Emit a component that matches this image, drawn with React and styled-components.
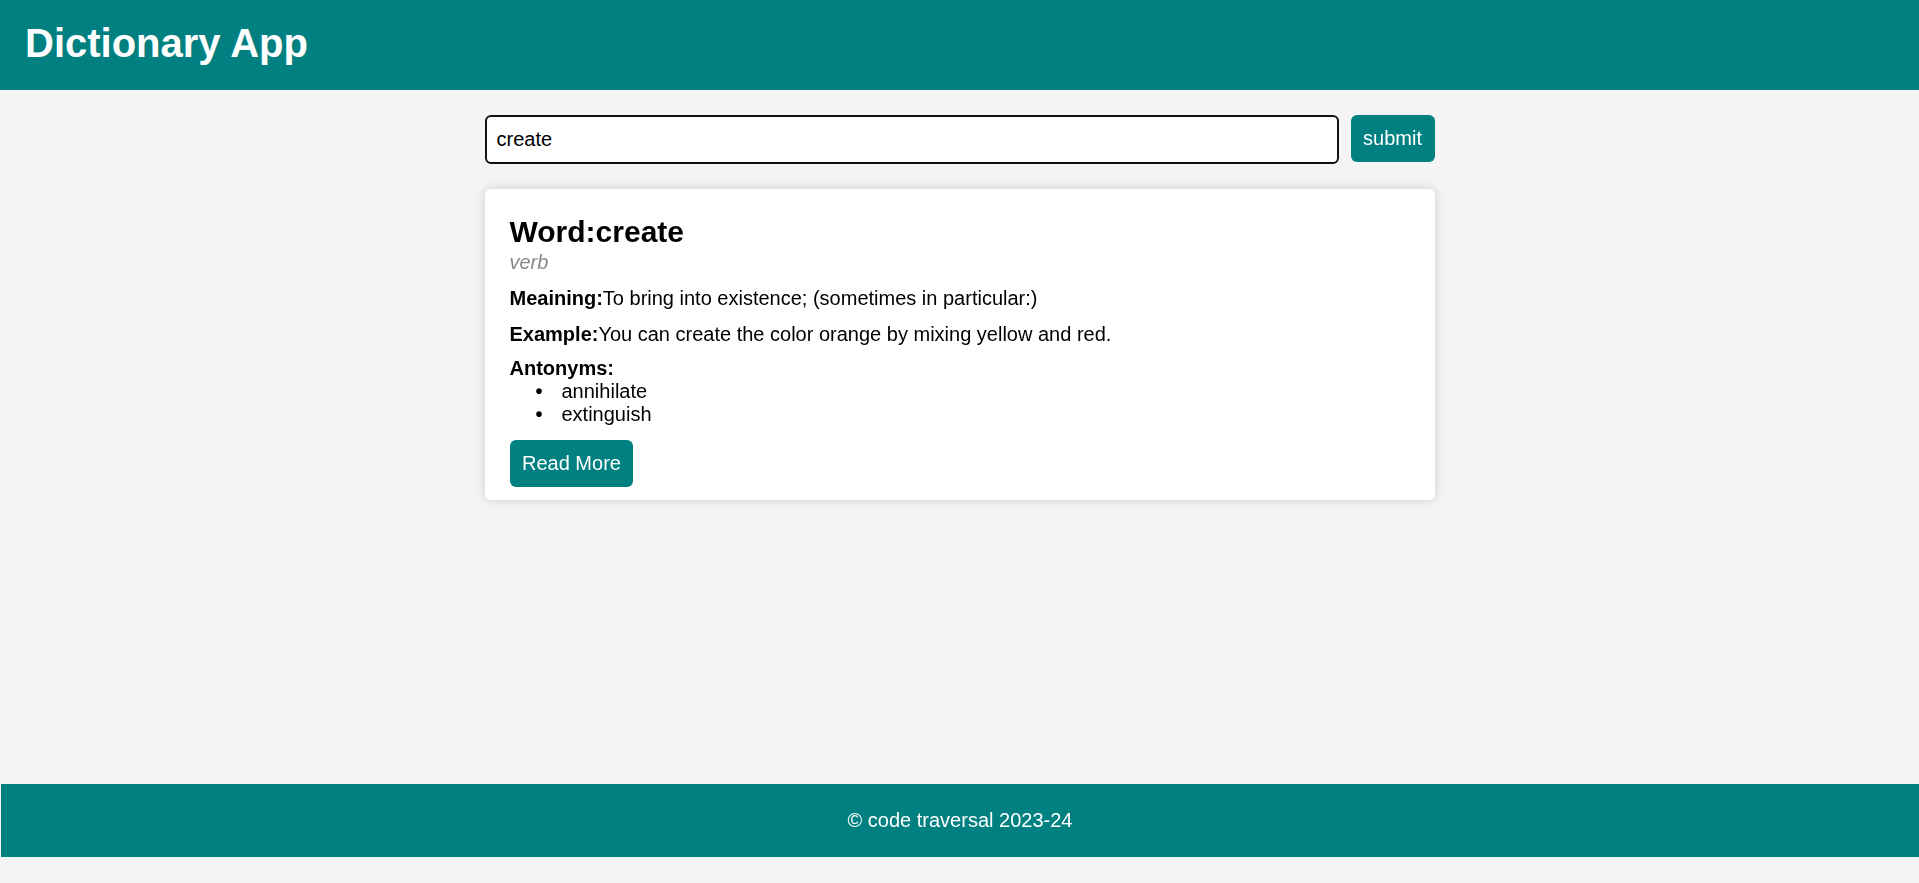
import React, { useState } from "react";
import styled, { createGlobalStyle } from "styled-components";

const GlobalStyle = createGlobalStyle`
  * {
    box-sizing: border-box;
  }

  body {
    margin: 0;
    background-color: #f4f4f4;
    font-family: "Liberation Sans", Arial, sans-serif;
    font-size: 20px;
    line-height: 23px;
    color: #000;
  }
`;

const entry = {
  word: "create",
  partOfSpeech: "verb",
  meaning: "To bring into existence; (sometimes in particular:)",
  example: "You can create the color orange by mixing yellow and red.",
  antonyms: ["annihilate", "extinguish"],
};

const App = () => {
  const [query, setQuery] = useState("create");

  return (
    <>
      <GlobalStyle />
      <Page>
        <Header>
          <Title>Dictionary App</Title>
        </Header>
        <Main>
          <SearchRow
            onSubmit={(e) => {
              e.preventDefault();
            }}
          >
            <SearchInput
              autoFocus
              value={query}
              onChange={(e) => setQuery(e.target.value)}
            />
            <Button type="submit">submit</Button>
          </SearchRow>
          <Card>
            <Word>Word:{entry.word}</Word>
            <Speech>{entry.partOfSpeech}</Speech>
            <Line>
              <b>Meaining:</b>
              {entry.meaning}
            </Line>
            <Line>
              <b>Example:</b>
              {entry.example}
            </Line>
            <Antonyms>
              <b>Antonyms:</b>
              <List>
                {entry.antonyms.map((a) => (
                  <Item key={a}>{a}</Item>
                ))}
              </List>
            </Antonyms>
            <Button type="button">Read More</Button>
          </Card>
        </Main>
        <Footer>© code traversal 2023-24</Footer>
      </Page>
    </>
  );
};

export default App;

const Page = styled.div`
  min-height: 100vh;
  display: flex;
  flex-direction: column;
`;

const Header = styled.header`
  background-color: #008080;
  padding: 20px 25px 24px;
`;

const Title = styled.h1`
  margin: 0;
  color: #fff;
  font-size: 40px;
  line-height: 46px;
  font-weight: bold;
`;

const Main = styled.main`
  flex: 1;
  width: 100%;
  max-width: 950px;
  margin: 0 auto;
  padding-top: 25px;
`;

const SearchRow = styled.form`
  display: flex;
  gap: 12px;
  align-items: center;
`;

const SearchInput = styled.input`
  flex: 1;
  height: 49px;
  padding: 0 10px;
  border: 2px solid #111;
  border-radius: 6px;
  background: #fff;
  font-family: inherit;
  font-size: 20px;
  color: #000;
  outline: none;
`;

const Button = styled.button`
  align-self: flex-start;
  padding: 12px 12.5px;
  border: none;
  border-radius: 6px;
  background-color: #008080;
  color: #fff;
  font-family: inherit;
  font-size: 20px;
  line-height: 23px;
  cursor: pointer;
`;

const Card = styled.div`
  margin-top: 25px;
  padding: 25px 25px 13px;
  display: flex;
  flex-direction: column;
  background: #fff;
  border-radius: 6px;
  box-shadow: 0 0 12px rgba(0, 0, 0, 0.16);

  ${Button} {
    margin-top: 14px;
  }
`;

const Word = styled.h2`
  margin: 0;
  font-size: 30px;
  line-height: 35px;
  font-weight: bold;
`;

const Speech = styled.p`
  margin: 2px 0 0;
  color: #888;
  font-style: italic;
`;

const Line = styled.p`
  margin: 13px 0 0;
`;

const Antonyms = styled.div`
  margin-top: 11px;
`;

const List = styled.ul`
  margin: 0;
  padding-left: 52px;
  list-style: none;
`;

const Item = styled.li`
  position: relative;

  &::before {
    content: "•";
    position: absolute;
    left: -26px;
    font-weight: bold;
  }
`;

const Footer = styled.footer`
  margin: 0 0 26px 1px;
  padding: 25px;
  background-color: #008080;
  color: #fff;
  text-align: center;
`;
